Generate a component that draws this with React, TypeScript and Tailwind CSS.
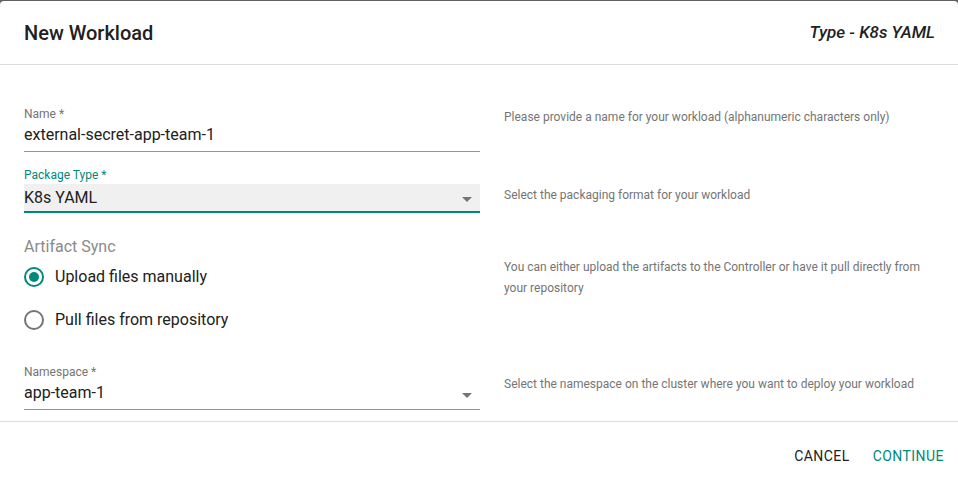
import { useState } from "react";

const font = { fontFamily: "Roboto, 'Liberation Sans', sans-serif" };

function Caret() {
  return (
    <svg width="10" height="5" viewBox="0 0 10 5" className="text-[#757575]">
      <path d="M0 0 L10 0 L5 5 Z" fill="currentColor" />
    </svg>
  );
}

function Radio({ checked, label, onClick }: { checked: boolean; label: string; onClick: () => void }) {
  return (
    <button type="button" onClick={onClick} className="flex h-[43px] items-center gap-[11px] text-left">
      <span
        className={
          "flex h-5 w-5 items-center justify-center rounded-full border-2 " +
          (checked ? "border-[#00897b]" : "border-[#757575]")
        }
      >
        {checked && <span className="h-[10px] w-[10px] rounded-full bg-[#00897b]" />}
      </span>
      <span className="text-base text-[#212121]">{label}</span>
    </button>
  );
}

export default function App() {
  const [sync, setSync] = useState("upload");

  return (
    <div className="min-h-[482px] bg-[#616161] pt-px" style={font}>
      <div className="h-[481px] rounded-t-[4px] bg-white">
        <header className="flex h-16 items-center justify-between border-b border-[#dcdcdc] pl-6 pr-[23px]">
          <h1 className="text-xl font-medium text-[#212121]">New Workload</h1>
          <span className="text-[17px] font-medium italic text-[#212121]">Type - K8s YAML</span>
        </header>

        <div className="h-[356px] px-6 pt-[41px]">
          <div className="grid grid-cols-[456px_1fr] gap-x-6">
            <div>
              <div className="text-xs leading-4 text-[#757575]">Name *</div>
              <div className="border-b border-[#949494] pb-[4px] pt-[1px] text-base leading-6 text-[#212121]">
                external-secret-app-team-1
              </div>
            </div>
            <p className="pt-[1px] text-xs leading-5 text-[#757575]">
              Please provide a name for your workload (alphanumeric characters only)
            </p>
          </div>

          <div className="mt-[15px] grid grid-cols-[456px_1fr] gap-x-6">
            <div>
              <div className="text-xs leading-4 text-[#00897b]">Package Type *</div>
              <div className="mt-[1px] flex h-[29px] items-center justify-between border-b-2 border-[#00897b] bg-[#f0f0f0] pr-[8px]">
                <span className="pt-[1px] text-base leading-6 text-[#212121]">K8s YAML</span>
                <span className="pt-[4px]">
                  <Caret />
                </span>
              </div>
            </div>
            <p className="pt-[18px] text-xs leading-5 text-[#757575]">
              Select the packaging format for your workload
            </p>
          </div>

          <div className="mt-[22px] grid grid-cols-[456px_1fr] gap-x-6">
            <div>
              <div className="text-base leading-6 text-[#8a8a8a]">Artifact Sync</div>
              <div className="-mt-1 flex flex-col">
                <Radio checked={sync === "upload"} label="Upload files manually" onClick={() => setSync("upload")} />
                <Radio checked={sync === "repo"} label="Pull files from repository" onClick={() => setSync("repo")} />
              </div>
            </div>
            <p className="pt-[22px] text-xs leading-[21px] text-[#757575]">
              You can either upload the artifacts to the Controller or have it pull directly from your repository
            </p>
          </div>

          <div className="mt-[23px] grid grid-cols-[456px_1fr] gap-x-6">
            <div>
              <div className="text-xs leading-4 text-[#757575]">Namespace *</div>
              <div className="flex items-center justify-between border-b border-[#949494] pb-[4px] pt-[1px] pr-[8px]">
                <span className="text-base leading-6 text-[#212121]">app-team-1</span>
                <span className="pt-[4px]">
                  <Caret />
                </span>
              </div>
            </div>
            <p className="pt-[10px] text-xs leading-5 text-[#757575]">
              Select the namespace on the cluster where you want to deploy your workload
            </p>
          </div>
        </div>

        <footer className="flex h-[61px] items-center justify-end gap-[7px] border-t border-[#dcdcdc] pr-[6px] pt-2">
          <button type="button" className="px-2 py-[6px] text-sm uppercase tracking-[0.45px] text-[#212121]">
            Cancel
          </button>
          <button type="button" className="px-2 py-[6px] text-sm uppercase tracking-[0.45px] text-[#00897b]">
            Continue
          </button>
        </footer>
      </div>
    </div>
  );
}
